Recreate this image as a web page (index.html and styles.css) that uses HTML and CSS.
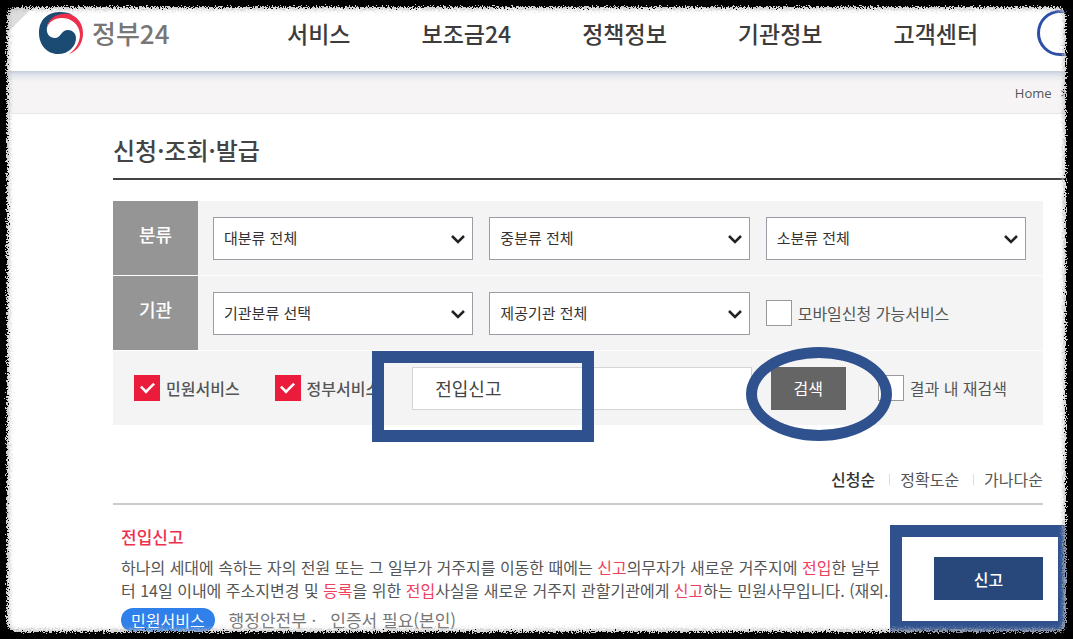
FILE: index.html
```html
<!DOCTYPE html>
<html lang="ko">
<head>
<meta charset="utf-8">
<title>정부24</title>
<link rel="stylesheet" href="styles.css">
</head>
<body>
<header class="header">
  <a class="brand" href="#">
    <svg class="brand-mark" viewBox="0 0 44 44" aria-hidden="true">
      <path fill="#ee2f4b" d="M8 18C8 8 16 2 24 2C35 2 44 10 44 22C44 33 38 40 30 43C37 38 41 31 41 23C40 13 32 7 23 7C15 7 9 11 8 18Z"/>
      <path fill="#1b4b72" d="M34 4C24 -2 0 -1 0 22C0 34 8 43 19 43C30 43 37 35 37 27C37 22 33 19 29 19C22 19 22 27 16 27C10 27 7 22 8 16C10 5 22 0 34 4Z"/>
    </svg>
    <span>정부24</span>
  </a>
  <nav class="nav">
    <a href="#">서비스</a>
    <a href="#">보조금24</a>
    <a href="#">정책정보</a>
    <a href="#">기관정보</a>
    <a href="#">고객센터</a>
  </nav>
  <button class="pill" type="button" aria-label="검색 열기"></button>
  <svg class="fold" viewBox="0 0 36 36" aria-hidden="true"><path fill="#dedede" d="M0 0H36L0 36Z"/></svg>
</header>
<nav class="crumbs"><a href="#">Home</a><span>&gt;</span></nav>

<main class="content">
  <h1 class="title">신청·조회·발급</h1>

  <form class="filters">
    <div class="row">
      <div class="row-label">분류</div>
      <div class="fields">
        <span class="select"><select aria-label="대분류"><option>대분류 전체</option></select><svg viewBox="0 0 14 10"><path d="M1 2L7 8L13 2"/></svg></span>
        <span class="select"><select aria-label="중분류"><option>중분류 전체</option></select><svg viewBox="0 0 14 10"><path d="M1 2L7 8L13 2"/></svg></span>
        <span class="select"><select aria-label="소분류"><option>소분류 전체</option></select><svg viewBox="0 0 14 10"><path d="M1 2L7 8L13 2"/></svg></span>
      </div>
    </div>
    <div class="row">
      <div class="row-label">기관</div>
      <div class="fields">
        <span class="select"><select aria-label="기관분류"><option>기관분류 선택</option></select><svg viewBox="0 0 14 10"><path d="M1 2L7 8L13 2"/></svg></span>
        <span class="select"><select aria-label="제공기관"><option>제공기관 전체</option></select><svg viewBox="0 0 14 10"><path d="M1 2L7 8L13 2"/></svg></span>
        <label class="check"><input type="checkbox">모바일신청 가능서비스</label>
      </div>
    </div>
    <div class="row search">
      <div class="kinds">
        <label class="check strong"><input type="checkbox" checked>민원서비스</label>
        <label class="check strong"><input type="checkbox" checked>정부서비스</label>
      </div>
      <div class="query">
        <input type="text" aria-label="검색어" value="전입신고">
        <span class="mark mark-query"></span>
      </div>
      <div class="submit">
        <button type="button">검색</button>
        <span class="mark mark-submit"></span>
      </div>
      <label class="check"><input type="checkbox">결과 내 재검색</label>
    </div>
  </form>

  <ul class="sort">
    <li><a class="current" href="#">신청순</a></li>
    <li><a href="#">정확도순</a></li>
    <li><a href="#">가나다순</a></li>
  </ul>

  <article class="result">
    <div class="result-body">
      <h2><a href="#">전입신고</a></h2>
      <p>하나의 세대에 속하는 자의 전원 또는 그 일부가 거주지를 이동한 때에는 <em>신고</em>의무자가 새로운 거주지에 <em>전입</em>한 날부<br>터 14일 이내에 주소지변경 및 <em>등록</em>을 위한 <em>전입</em>사실을 새로운 거주지 관할기관에게 <em>신고</em>하는 민원사무입니다. (재외...</p>
      <div class="meta"><span class="badge">민원서비스</span><span>행정안전부 ·</span><span>인증서 필요(본인)</span></div>
    </div>
    <div class="action">
      <button type="button">신고</button>
      <span class="mark mark-action"></span>
    </div>
  </article>
</main>

<svg class="defs" aria-hidden="true">
  <filter id="rough" x="0" y="0" width="100%" height="100%">
    <feTurbulence type="fractalNoise" baseFrequency="0.7" numOctaves="2" seed="4"/>
    <feDisplacementMap in="SourceGraphic" scale="9" xChannelSelector="R" yChannelSelector="G"/>
  </filter>
</svg>
<div class="frame"></div>
</body>
</html>
```
FILE: styles.css
```css
* {
  box-sizing: border-box;
}

body {
  margin: 0;
  height: 100vh;
  overflow: hidden;
  background: #fff;
  color: #555;
  font: 16px/24px "Noto Sans CJK KR", sans-serif;
}

a {
  color: inherit;
  text-decoration: none;
}

button,
input,
select {
  margin: 0;
  font: inherit;
  color: inherit;
}

.header {
  position: relative;
  display: flex;
  align-items: center;
  height: 71px;
  padding: 0 0 6px 39px;
  overflow: hidden;
}

.brand {
  display: flex;
  align-items: center;
  gap: 9px;
  width: 248px;
  flex: none;
  color: #777;
  font-size: 26px;
  font-weight: 500;
}

.brand-mark {
  width: 44px;
  height: 44px;
}

.nav {
  display: flex;
  gap: 71px;
  flex: none;
  color: #3c3c3c;
  font-size: 23px;
  font-weight: 500;
}

.pill {
  flex: none;
  width: 120px;
  height: 46px;
  margin-left: 59px;
  border: 3px solid #2d4fa8;
  border-radius: 23px;
  background: #fff;
}

.fold {
  position: absolute;
  left: 0;
  top: 0;
  width: 40px;
  height: 40px;
}

.crumbs {
  display: flex;
  justify-content: flex-end;
  gap: 9px;
  height: 43px;
  padding: 10px 5px 0 0;
  border-bottom: 1px solid #e6e6e6;
  background: linear-gradient(#c6cedc, #e6e8ee 5px, #f6f4f5 11px);
  font-family: "Open Sans", sans-serif;
  font-size: 13px;
}

.content {
  padding: 0 30px 0 113px;
}

.title {
  margin: 0 -30px 21px 0;
  padding: 19px 0 11px;
  border-bottom: 2px solid #444;
  color: #444;
  font-size: 24px;
  font-weight: 500;
  line-height: 34px;
}

.filters {
  display: flex;
  flex-direction: column;
  gap: 1px;
}

.row {
  display: flex;
  height: 74px;
  background: #f4f4f4;
}

.row-label {
  display: flex;
  align-items: center;
  justify-content: center;
  width: 85px;
  padding-bottom: 8px;
  background: #959595;
  color: #fff;
  font-size: 18px;
  font-weight: 500;
}

.fields {
  flex: 1;
  display: grid;
  grid-template-columns: repeat(3, 1fr);
  align-items: center;
  gap: 16px;
  padding: 0 17px 0 15px;
}

.select {
  position: relative;
}

.select select {
  display: block;
  appearance: none;
  width: 100%;
  height: 43px;
  padding: 0 30px 0 10px;
  border: 1px solid #9c9ca4;
  border-radius: 0;
  background: #fff;
  color: #333;
  font-size: 15px;
}

.select svg {
  position: absolute;
  right: 8px;
  top: 17px;
  width: 14px;
  height: 10px;
  fill: none;
  stroke: #222;
  stroke-width: 2.5;
  pointer-events: none;
}

.check {
  display: flex;
  align-items: center;
  gap: 6px;
  white-space: nowrap;
}

.check input {
  appearance: none;
  display: grid;
  place-items: center;
  width: 26px;
  height: 26px;
  border: 1px solid #999;
  background: #fff;
}

.check input:checked {
  border-color: #eb1c3b;
  background: #eb1c3b;
}

.check input:checked::after {
  content: "";
  width: 12px;
  height: 7px;
  margin-bottom: 4px;
  border: solid #fff;
  border-width: 0 0 3px 3px;
  transform: rotate(-45deg) scale(0.85);
}

.strong {
  font-weight: 500;
}

.search {
  align-items: center;
  padding: 0 36px 0 21px;
}

.kinds {
  display: flex;
  gap: 35px;
  margin-right: 32px;
}

.query {
  position: relative;
  flex: 1;
  margin-right: 19px;
}

.query input {
  display: block;
  width: 100%;
  height: 43px;
  padding: 0 22px;
  border: 1px solid #d5d5d5;
  background: #fff;
  color: #444;
  font-size: 18px;
}

.submit {
  position: relative;
  margin-right: 32px;
}

.submit button {
  display: block;
  width: 75px;
  height: 43px;
  border: 0;
  background: #656565;
  color: #fff;
}

.mark {
  position: absolute;
  border: 12px solid #2f528f;
  pointer-events: none;
}

.mark-query {
  left: -40px;
  top: -16px;
  width: 222px;
  height: 91px;
}

.mark-submit {
  left: -25px;
  top: -20px;
  width: 146px;
  height: 94px;
  border-width: 11px;
  border-radius: 50%;
}

.sort {
  display: flex;
  justify-content: flex-end;
  margin: 0;
  padding: 42px 0 12px;
  border-bottom: 2px solid #ccc;
  list-style: none;
}

.sort li {
  display: flex;
  align-items: center;
}

.sort li + li::before {
  content: "";
  width: 1px;
  height: 11px;
  margin: 0 10px 0 14px;
  background: #ddd;
}

.sort .current {
  color: #333;
  font-weight: 500;
}

.result {
  display: flex;
  justify-content: space-between;
  padding: 20px 0 0 8px;
  white-space: nowrap;
}

.result h2 {
  margin: 0 0 7px;
  color: #ee2f4f;
  font-size: 17px;
  font-weight: 500;
}

.result p {
  margin: 0 0 6px;
  line-height: 23px;
}

.result em {
  color: #f0405e;
  font-style: normal;
}

.meta {
  display: flex;
  align-items: center;
  gap: 14px;
  color: #777;
  font-size: 17px;
}

.badge {
  padding: 0 10px;
  border-radius: 12px;
  background: #2f80ea;
  color: #fff;
  font-size: 16px;
}

.action {
  position: relative;
  align-self: flex-start;
  padding-top: 32px;
}

.action button {
  display: block;
  width: 109px;
  height: 43px;
  border: 0;
  background: #28487c;
  color: #fff;
  font-weight: 500;
}

.mark-action {
  left: -44px;
  top: 0;
  width: 180px;
  height: 108px;
}

.defs {
  position: absolute;
  width: 0;
  height: 0;
}

.frame {
  position: fixed;
  inset: -12px;
  border: 19px solid #000;
  border-radius: 28px;
  box-shadow: inset 0 0 4px 2px #bbb;
  filter: url(#rough);
  pointer-events: none;
}
```
